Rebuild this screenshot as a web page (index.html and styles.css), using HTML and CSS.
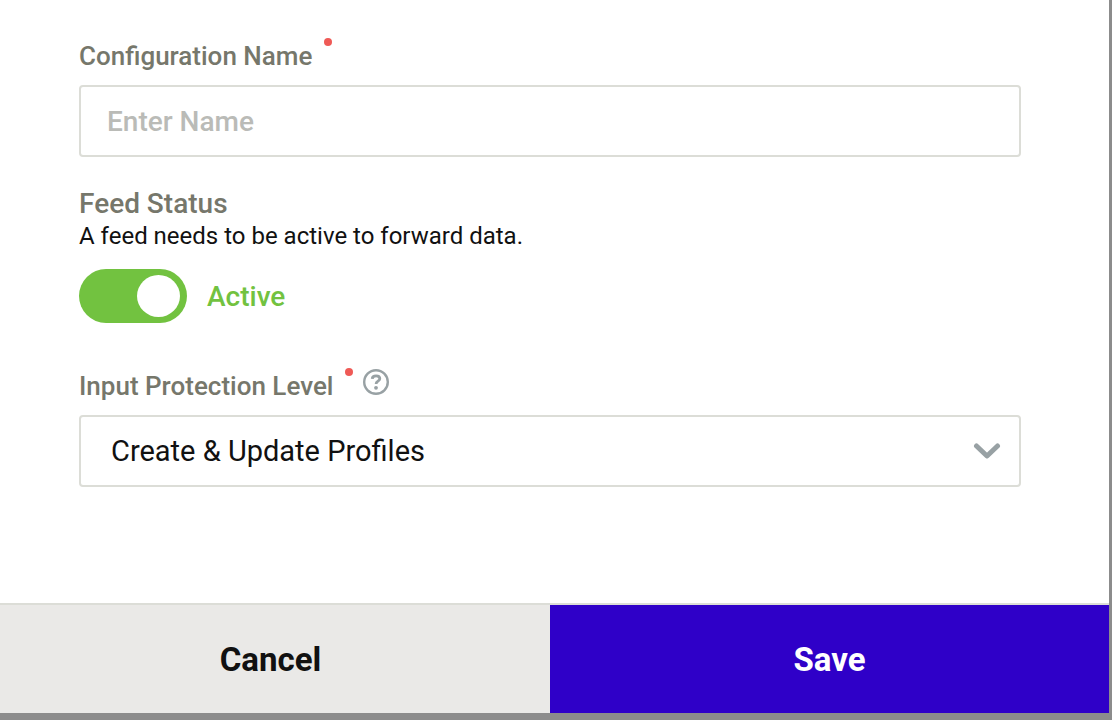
FILE: index.html
```html
<!DOCTYPE html>
<html lang="en">
<head>
    <meta charset="UTF-8">
    <meta name="viewport" content="width=device-width, initial-scale=1.0">
    <title>Feed Configuration</title>

    <link rel="stylesheet" href="styles.css">
</head>
<body>

<form class="dialog">
    <div class="dialog-body">
        <div class="field">
            <div class="field-label">
                <label for="config-name">Configuration Name</label>
                <span class="required"></span>
            </div>
            <input type="text" id="config-name" class="control" placeholder="Enter Name" required>
        </div>

        <div class="status">
            <h2 class="status-title">Feed Status</h2>
            <p class="status-hint">A feed needs to be active to forward data.</p>
            <div class="status-row">
                <input type="checkbox" id="feed-status" class="toggle" checked>
                <label for="feed-status" class="toggle-label">Active</label>
            </div>
        </div>

        <div class="field">
            <div class="field-label">
                <label for="protection-level">Input Protection Level</label>
                <span class="required"></span>
                <button type="button" class="help" aria-label="Help">
                    <svg width="26" height="26" viewBox="0 0 26 26" fill="none" stroke="currentColor">
                        <circle cx="13" cy="13" r="11.8" stroke-width="2.4"/>
                        <path d="M9.2 9.8C9.4 7.8 10.9 6.9 13.1 6.9C15.4 6.9 16.8 8 16.8 9.8C16.8 12.2 13.1 12.2 13.1 14.9" stroke-width="2.8"/>
                        <circle cx="13" cy="18.8" r="1.9" fill="currentColor" stroke="none"/>
                    </svg>
                </button>
            </div>
            <div class="select-wrap">
                <select id="protection-level" class="control">
                    <option>Create &amp; Update Profiles</option>
                </select>
                <svg class="chevron" width="28" height="18" viewBox="0 0 28 18" fill="none" stroke="currentColor">
                    <path d="M3.5 4L14 14L24.5 4" stroke-width="5" stroke-linecap="round" stroke-linejoin="round"/>
                </svg>
            </div>
        </div>
    </div>

    <div class="dialog-footer">
        <button type="button" class="btn btn-cancel">Cancel</button>
        <button type="submit" class="btn btn-save">Save</button>
    </div>
</form>

</body>
</html>
```
FILE: styles.css
```css
* {
    box-sizing: border-box;
}
body {
    margin: 0;
    min-height: 100vh;
    display: flex;
    background-color: #8c8c8c;
    color: #111;
    font-family: Roboto, "Liberation Sans", sans-serif;
    overflow-x: hidden;
}
button, input, select {
    font-family: inherit;
    margin: 0;
}
/* the dialog runs a little past the left edge of the window */
.dialog {
    flex: 1;
    display: flex;
    flex-direction: column;
    margin: 0 3px 7px -9px;
    background-color: #fff;
}
.dialog-body {
    flex: 1;
    padding: 36px 88px;
}
.field-label {
    display: flex;
    align-items: flex-start;
    height: 49px;
    color: #76776b;
    font-size: 26px;
    font-weight: 500;
    line-height: 40px;
}
.required {
    width: 8px;
    height: 8px;
    margin: 2px 0 0 12px;
    border-radius: 50%;
    background-color: #ef5a56;
}
.help {
    display: flex;
    margin: 3px 0 0 10px;
    padding: 0;
    border: 0;
    background: none;
    color: #98a1a4;
}
.control {
    display: block;
    width: 100%;
    height: 72px;
    padding: 0 26px;
    border: 2px solid #dcddd7;
    border-radius: 4px;
    background-color: #fff;
    color: #111;
    font-size: 28px;
}
.control::placeholder {
    color: #babbb7;
    font-weight: 500;
    opacity: 1;
}
.select-wrap {
    position: relative;
}
.select-wrap .control {
    padding: 0 30px;
    font-size: 29px;
    appearance: none;
}
.chevron {
    position: absolute;
    top: 27px;
    right: 20px;
    color: #98a1a4;
    pointer-events: none;
}
.status {
    padding: 29px 0 43px;
}
.status-title {
    margin: 0;
    color: #76776b;
    font-size: 28px;
    font-weight: 500;
    line-height: 36px;
}
.status-hint {
    margin: 0;
    font-size: 24px;
    line-height: 29px;
}
.status-row {
    display: flex;
    align-items: center;
    gap: 20px;
    margin-top: 18px;
}
.toggle {
    appearance: none;
    display: flex;
    justify-content: flex-end;
    align-items: center;
    width: 108px;
    height: 54px;
    padding: 0 7px;
    border-radius: 27px;
    background-color: #72c240;
}
.toggle::before {
    content: "";
    width: 43px;
    height: 42px;
    border-radius: 50%;
    background-color: #fff;
}
.toggle:not(:checked) {
    justify-content: flex-start;
    background-color: #babbb7;
}
.toggle-label {
    color: #72c240;
    font-size: 28px;
    font-weight: 500;
}
.dialog-footer {
    display: flex;
    border-top: 2px solid #dcddd7;
}
.btn {
    flex: 1;
    height: 108px;
    border: 0;
    font-size: 33px;
    font-weight: 700;
}
.btn-cancel {
    background-color: #eae9e7;
    color: #111;
}
.btn-save {
    background-color: #2f00c8;
    color: #fff;
}
```
